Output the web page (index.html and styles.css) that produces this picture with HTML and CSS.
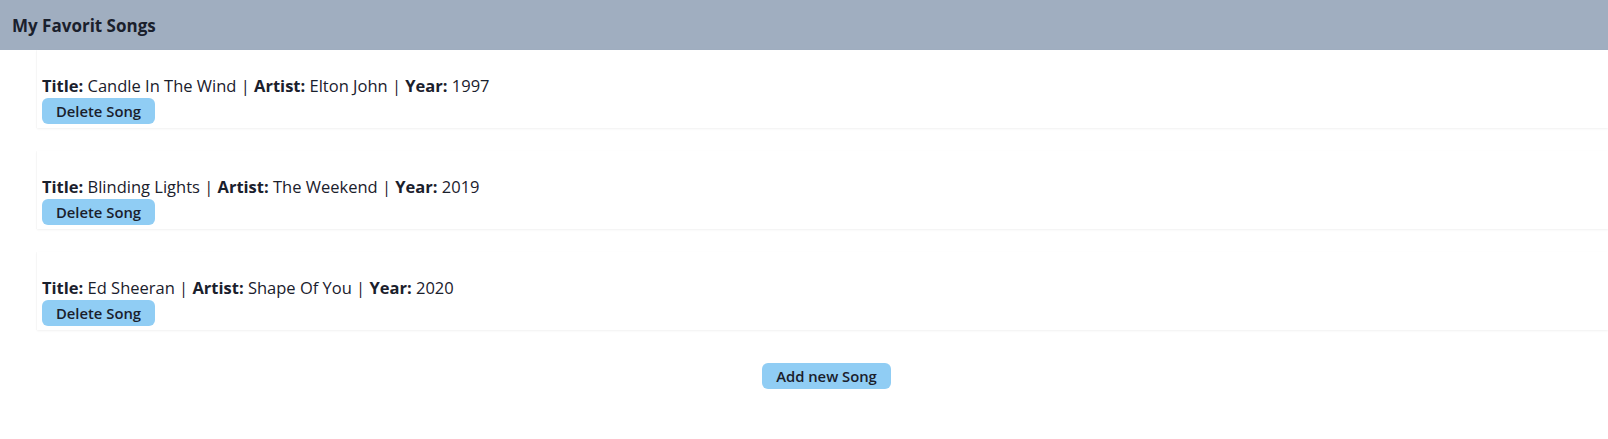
FILE: index.html
```html
<!DOCTYPE html>
<html lang="en">
<head>
<meta charset="utf-8">
<title>My Favorit Songs</title>
<link rel="stylesheet" href="styles.css">
</head>
<body>
<header class="topbar">
  <h1 class="topbar-title">My Favorit Songs</h1>
</header>
<ul class="song-list">
  <li class="song-card">
    <p class="song-info"><b>Title:</b> Candle In The Wind | <b>Artist:</b> Elton John | <b>Year:</b> 1997</p>
    <button class="btn">Delete Song</button>
  </li>
  <li class="song-card">
    <p class="song-info"><b>Title:</b> Blinding Lights | <b>Artist:</b> The Weekend | <b>Year:</b> 2019</p>
    <button class="btn">Delete Song</button>
  </li>
  <li class="song-card">
    <p class="song-info"><b>Title:</b> Ed Sheeran | <b>Artist:</b> Shape Of You | <b>Year:</b> 2020</p>
    <button class="btn">Delete Song</button>
  </li>
</ul>
<div class="actions">
  <button class="btn">Add new Song</button>
</div>
</body>
</html>
```

FILE: styles.css
```css
* { box-sizing: border-box; }

body {
  margin: 0;
  font-family: "Open Sans", "Noto Sans", "Liberation Sans", sans-serif;
  color: #1a202c;
  background: #ffffff;
  overflow-x: hidden;
}

.topbar {
  height: 50px;
  background: #a0aec0;
  display: flex;
  align-items: center;
  padding-left: 12px;
}

.topbar-title {
  margin: 0;
  font-size: 17px;
  font-weight: 700;
}

.song-list {
  list-style: none;
  margin: 0;
  padding: 0 0 0 37px;
  display: flex;
  flex-direction: column;
  gap: 23px;
}

.song-card {
  padding: 24px 5px 4px 5px;
  box-shadow: 0 1px 2px rgba(0, 0, 0, 0.06), -1px 0 1px rgba(0, 0, 0, 0.02);
  background: #ffffff;
}

.song-info {
  margin: 0;
  font-size: 16.5px;
  line-height: 24px;
}

.song-info b { font-weight: 700; }

.btn {
  font-family: inherit;
  font-size: 14.8px;
  font-weight: 600;
  color: #1a202c;
  background: #90cdf4;
  border: none;
  border-radius: 6px;
  height: 26px;
  padding: 0 14px;
  line-height: 26px;
  cursor: pointer;
}

.actions {
  display: flex;
  justify-content: center;
  padding-left: 45px;
  margin-top: 33px;
}
```
